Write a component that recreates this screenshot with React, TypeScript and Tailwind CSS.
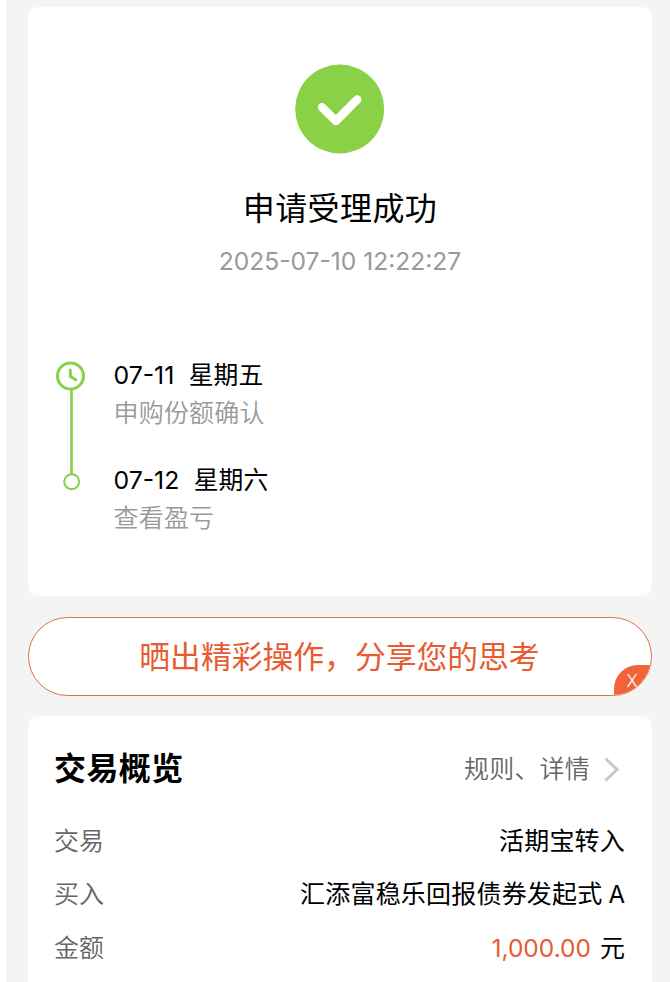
import type { ReactNode } from 'react';

function StatusCard() {
  return (
    <section className="h-[589px] rounded-[10px] bg-white">
      <div className="flex flex-col items-center pt-[57px]">
        <svg width="90" height="90" viewBox="0 0 90 90" className="block">
          <circle cx="44.7" cy="45" r="44.5" fill="#8bd148" />
          <path d="M27 43.3 L40.9 57 L62.2 35.5" fill="none" stroke="#fff" strokeWidth="8.4" strokeLinecap="round" strokeLinejoin="round" />
        </svg>
        <h1 className="mt-[35px] h-10 text-[32px] leading-10 tracking-[0.4px] text-black">申请受理成功</h1>
        <p className="mt-[16px] h-8 text-[24.6px] leading-8 text-[#999]">2025-07-10 12:22:27</p>
      </div>
      <div className="mt-[81px] flex pl-[27px]">
        <svg width="32" height="134" viewBox="0 0 32 134" className="block" fill="none" stroke="#86d148">
          <circle cx="15.5" cy="18" r="13" strokeWidth="3" />
          <path d="M15.3 12 V18.5 L20.8 21.7" strokeWidth="3" strokeLinecap="round" strokeLinejoin="round" />
          <path d="M16.5 31 V116" strokeWidth="2.6" />
          <circle cx="16.7" cy="123.7" r="7.5" strokeWidth="2" />
        </svg>
        <div className="ml-[26.5px]">
          <Step day="07-11" week="星期五" note="申购份额确认" />
          <Step day="07-12" week="星期六" note="查看盈亏" />
        </div>
      </div>
    </section>
  );
}

function Step({ day, week, note }: { day: string; week: string; note: string }) {
  return (
    <div className="h-[105px] whitespace-nowrap">
      <div className="flex h-[34px] gap-[14.5px] text-[24.8px] leading-[34px] text-black">
        <span>{day}</span>
        <span>{week}</span>
      </div>
      <div className="mt-[4px] h-[34px] text-[25px] leading-[34px] font-[350] tracking-[0.2px] text-[#999]">{note}</div>
    </div>
  );
}

function ShareBanner() {
  return (
    <section className="relative mt-[21px] flex h-[79px] items-center justify-center overflow-hidden rounded-full border border-[#dc7048] bg-white">
      <p className="pr-px text-[30.8px] leading-10 whitespace-nowrap text-[#e85a30]">晒出精彩操作，分享您的思考</p>
      <button className="absolute -right-px -bottom-px h-[31px] w-[38px] rounded-tl-[24px] bg-[#f26337] pr-[2px] text-[17px] leading-[30px] font-light text-white">
        X
      </button>
    </section>
  );
}

function Row({ label, children }: { label: string; children: ReactNode }) {
  return (
    <div className="flex h-[53.5px] items-center justify-between text-[25px] leading-[34px] whitespace-nowrap">
      <span className="-ml-px font-[350] text-[#666]">{label}</span>
      <span className="text-black">{children}</span>
    </div>
  );
}

function OverviewCard() {
  return (
    <section className="mt-[20px] h-[266px] rounded-t-[10px] bg-white pr-[27px] pl-[27px]">
      <header className="flex h-[98px] items-center justify-between pt-[8px]">
        <h2 className="-ml-px text-[32px] leading-10 font-bold tracking-[0.4px] text-black">交易概览</h2>
        <div className="flex items-center text-[25px] leading-[34px] font-[350] text-[#666]">
          <span className="tracking-[0.2px]">规则、详情</span>
          <svg width="16" height="26" viewBox="0 0 16 26" className="mr-[5px] ml-[14px]" fill="none" stroke="#c8c8c8" strokeWidth="3">
            <path d="M1.5 2.5 L13 13.5 L1.5 24.5" />
          </svg>
        </div>
      </header>
      <Row label="交易">
        <span className="tracking-[0.2px]">活期宝转入</span>
      </Row>
      <Row label="买入">
        <span className="tracking-[0.2px]">汇添富稳乐回报债券发起式</span>
        <span className="ml-[6px] text-[24px]">A</span>
      </Row>
      <Row label="金额">
        <span className="mr-[9px] text-[24.5px] text-[#e85a30]">1,000.00</span>元
      </Row>
    </section>
  );
}

export default function App() {
  return (
    <div className="h-[982px] w-[670px] overflow-hidden bg-white pl-[6px] font-[Inter,'Noto_Sans_CJK_SC',sans-serif]">
      <main className="h-full bg-[#f4f4f4] pt-[7px] pr-[18px] pl-[22px]">
        <StatusCard />
        <ShareBanner />
        <OverviewCard />
      </main>
    </div>
  );
}
